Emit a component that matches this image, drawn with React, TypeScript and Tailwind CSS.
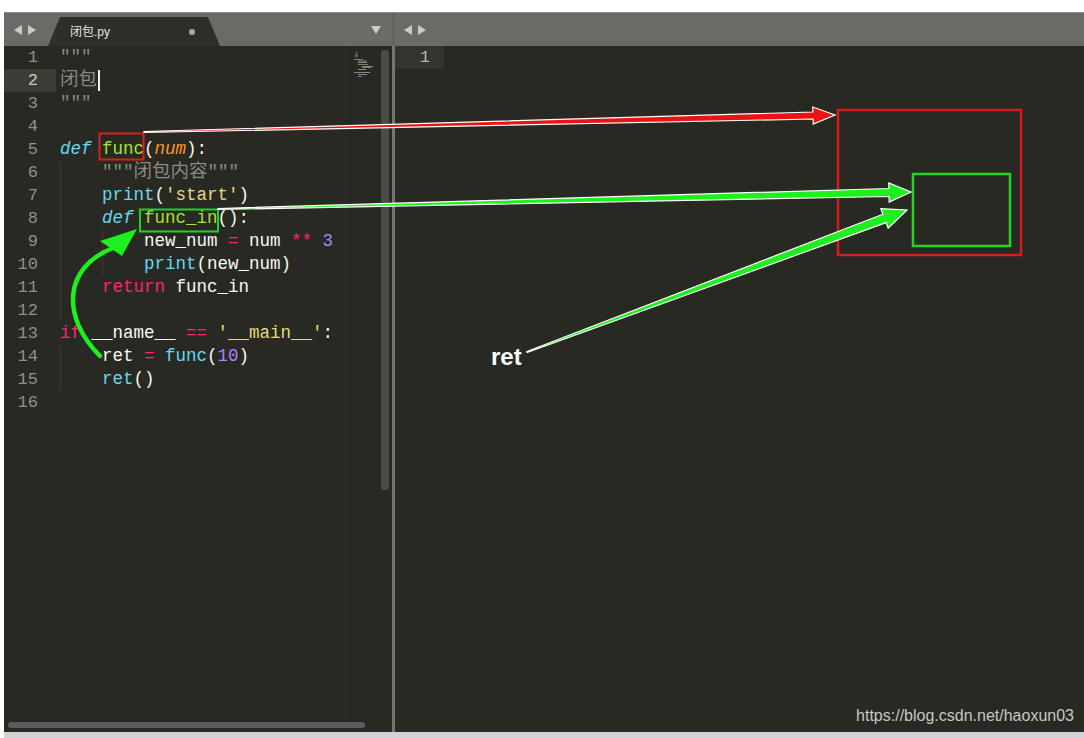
import React from 'react';

type Tok = { t: string; c?: string; it?: boolean; cjk?: boolean };
type Line = { indent: number; toks: Tok[]; cursor?: boolean };

const GREY = 'text-[#8a8a80]';
const CYAN = 'text-[#66d9ef]';
const GREEN = 'text-[#a6e22e]';
const ORANGE = 'text-[#fd971f]';
const YELLOW = 'text-[#e6db74]';
const PINK = 'text-[#f92672]';
const PURPLE = 'text-[#ae81ff]';
const WHITE = 'text-[#f8f8f2]';

const lines: Line[] = [
  { indent: 0, toks: [{ t: '"""', c: GREY }] },
  { indent: 0, toks: [{ t: '闭包', c: GREY, cjk: true }], cursor: true },
  { indent: 0, toks: [{ t: '"""', c: GREY }] },
  { indent: 0, toks: [] },
  {
    indent: 0,
    toks: [
      { t: 'def', c: CYAN, it: true },
      { t: ' ' },
      { t: 'func', c: GREEN },
      { t: '(' },
      { t: 'num', c: ORANGE, it: true },
      { t: '):' },
    ],
  },
  { indent: 1, toks: [{ t: '"""', c: GREY }, { t: '闭包内容', c: GREY, cjk: true }, { t: '"""', c: GREY }] },
  { indent: 1, toks: [{ t: 'print', c: CYAN }, { t: '(' }, { t: "'start'", c: YELLOW }, { t: ')' }] },
  { indent: 1, toks: [{ t: 'def', c: CYAN, it: true }, { t: ' ' }, { t: 'func_in', c: GREEN }, { t: '():' }] },
  {
    indent: 2,
    toks: [
      { t: 'new_num ' },
      { t: '=', c: PINK },
      { t: ' num ' },
      { t: '**', c: PINK },
      { t: ' ' },
      { t: '3', c: PURPLE },
    ],
  },
  { indent: 2, toks: [{ t: 'print', c: CYAN }, { t: '(new_num)' }] },
  { indent: 1, toks: [{ t: 'return', c: PINK }, { t: ' func_in' }] },
  { indent: 1, toks: [] },
  {
    indent: 0,
    toks: [
      { t: 'if', c: PINK },
      { t: ' __name__ ' },
      { t: '==', c: PINK },
      { t: ' ' },
      { t: "'__main__'", c: YELLOW },
      { t: ':' },
    ],
  },
  {
    indent: 1,
    toks: [
      { t: 'ret ' },
      { t: '=', c: PINK },
      { t: ' ' },
      { t: 'func', c: CYAN },
      { t: '(' },
      { t: '10', c: PURPLE },
      { t: ')' },
    ],
  },
  { indent: 1, toks: [{ t: 'ret', c: CYAN }, { t: '()' }] },
  { indent: 0, toks: [] },
];

// tapered arrow: thin at the start, full shaft width at the head
function arrowPts(x0: number, y0: number, x1: number, y1: number, w: number, hl: number, hw: number) {
  const dx = x1 - x0;
  const dy = y1 - y0;
  const len = Math.hypot(dx, dy);
  const ux = dx / len;
  const uy = dy / len;
  const nx = -uy;
  const ny = ux;
  const bx = x1 - ux * hl;
  const by = y1 - uy * hl;
  const p = (x: number, y: number) => `${x.toFixed(1)},${y.toFixed(1)}`;
  return [
    p(x0 + nx * 0.5, y0 + ny * 0.5),
    p(bx + (nx * w) / 2, by + (ny * w) / 2),
    p(bx + nx * hw, by + ny * hw),
    p(x1, y1),
    p(bx - nx * hw, by - ny * hw),
    p(bx - (nx * w) / 2, by - (ny * w) / 2),
    p(x0 - nx * 0.5, y0 - ny * 0.5),
  ].join(' ');
}

function Tri({ dir }: { dir: 'l' | 'r' | 'd' }) {
  const pts = dir === 'l' ? '8,0 8,10 0,5' : dir === 'r' ? '0,0 0,10 8,5' : '0,0 10,0 5,8';
  return (
    <svg width={dir === 'd' ? 10 : 8} height={dir === 'd' ? 8 : 10} viewBox={dir === 'd' ? '0 0 10 8' : '0 0 8 10'}>
      <polygon points={pts} fill="#c9cac6" />
    </svg>
  );
}

function TabBar() {
  return (
    <div className="h-[34px] flex bg-[#6a6b67] border-t border-[#8d8e8a]">
      <div className="w-[388px] flex items-center pl-[10px] pr-[11px]">
        <div className="flex items-center gap-[6px]">
          <Tri dir="l" />
          <Tri dir="r" />
        </div>
        <div className="self-end ml-[12px] w-[172px] h-[29px] bg-[#2e2f2a] [clip-path:polygon(12px_0,calc(100%_-_12px)_0,100%_100%,0_100%)] flex items-center justify-between pl-[22px] pr-[25px]">
          <span className="text-[12px] text-[#e6e6e2] font-['Liberation_Sans','Noto_Sans_CJK_SC',sans-serif]">闭包.py</span>
          <span className="w-[6px] h-[6px] rounded-full bg-[#a9aaa6]" />
        </div>
        <div className="flex-1" />
        <Tri dir="d" />
      </div>
      <div className="w-[3px] bg-[#62635f]" />
      <div className="flex-1 flex items-center pl-[9px]">
        <div className="flex items-center gap-[6px]">
          <Tri dir="l" />
          <Tri dir="r" />
        </div>
      </div>
    </div>
  );
}

function CodeLine({ line }: { line: Line }) {
  return (
    <div className="h-[23px] flex items-stretch whitespace-pre leading-[23px]">
      {Array.from({ length: line.indent }).map((_, i) => (
        <span key={i} className="w-[42px] shrink-0 border-l border-[#393a34]" />
      ))}
      {line.toks.map((tk, i) => (
        <span
          key={i}
          className={`${tk.c ?? WHITE} ${tk.it ? 'italic' : ''} ${tk.cjk ? 'text-[18.5px]' : ''}`}
        >
          {tk.t}
        </span>
      ))}
      {line.cursor && <span className="w-[2px] my-[1px] ml-[1px] bg-[#f0f0ea]" />}
    </div>
  );
}

function Minimap() {
  const rows = [
    [1, 3, '#8a8a80'],
    [1, 3, '#8a8a80'],
    [1, 3, '#8a8a80'],
    [0, 0, ''],
    [0, 9, '#8fc4b8'],
    [4, 9, '#7a7a70'],
    [4, 9, '#c8c8c0'],
    [4, 10, '#9fcf6a'],
    [8, 11, '#c8c8c0'],
    [8, 9, '#8fc4d8'],
    [4, 8, '#c8c8c0'],
    [0, 0, ''],
    [0, 16, '#c8c8c0'],
    [4, 9, '#c8c8c0'],
    [4, 4, '#8fc4d8'],
  ] as const;
  return (
    <div className="w-[29px] border-l border-[#1f201c] pt-[6px] pl-[3px] flex flex-col gap-[0.5px]">
      {rows.map(([ml, w, c], i) => (
        <div key={i} className="h-[1.2px] flex">
          <div style={{ width: ml }} />
          {w > 0 && <div style={{ width: w, background: c }} className="opacity-60" />}
        </div>
      ))}
    </div>
  );
}

function LeftPane() {
  return (
    <div className="w-[388px] flex flex-col">
      <div className="flex-1 flex min-h-0">
        <div className="w-[52px] flex flex-col font-['Liberation_Mono',monospace] text-[17px] text-[#8f908a]">
          {lines.map((_, i) => (
            <div
              key={i}
              className={`h-[23px] leading-[23px] text-right pr-[18px] ${i === 1 ? 'bg-[#3c3b34] text-[#c9c9c2]' : ''}`}
            >
              {i + 1}
            </div>
          ))}
        </div>
        <div className="w-[294px] pl-[4px] flex flex-col font-['Liberation_Mono','Noto_Sans_CJK_SC',monospace] text-[17.5px]">
          {lines.map((l, i) => (
            <CodeLine key={i} line={l} />
          ))}
        </div>
        <Minimap />
        <div className="w-[13px] pt-[4px] pl-[2px]">
          <div className="w-[8px] h-[440px] rounded-[3px] bg-[#4b4c47]" />
        </div>
      </div>
      <div className="h-[10px] pl-[4px]">
        <div className="w-[357px] h-[6px] rounded-[3px] bg-[#5c5d58]" />
      </div>
    </div>
  );
}

function RightPane() {
  return (
    <div className="flex-1 flex">
      <div className="w-[49px] font-['Liberation_Mono',monospace] text-[17px] text-[#b5b5ae]">
        <div className="h-[23px] leading-[23px] text-right pr-[14px] bg-[#34342e]">1</div>
      </div>
      <div className="flex-1 flex flex-col justify-end items-end pr-[10px] pb-[4px]">
        <span className="text-[16px] text-[#c6c6c4] font-['Liberation_Sans',sans-serif]">https://blog.csdn.net/haoxun03</span>
      </div>
    </div>
  );
}

function Annotations() {
  return (
    <svg className="absolute left-0 top-0 pointer-events-none" width={1084} height={738} viewBox="0 0 1084 738">
      {/* boxes */}
      <rect x={99.5} y={133.5} width={44} height={26} fill="none" stroke="#d9201f" strokeWidth={2} />
      <rect x={140} y={209.5} width={78} height={22} fill="none" stroke="#22d222" strokeWidth={2} />
      <rect x={838} y={110} width={183} height={145} fill="none" stroke="#d41c1c" strokeWidth={2.5} />
      <rect x={913} y={174} width={97} height={72} fill="none" stroke="#24d424" strokeWidth={2.5} />

      {/* straight arrows */}
      <polygon
        points={arrowPts(144, 132, 835, 115, 7, 22, 8.5)}
        fill="#ea1212"
        stroke="#ffffff"
        strokeWidth={1.2}
        strokeLinejoin="miter"
      />
      <polygon
        points={arrowPts(218, 209, 911, 192, 8, 22, 9.5)}
        fill="#1ef01e"
        stroke="#ffffff"
        strokeWidth={1.2}
        strokeLinejoin="miter"
      />
      <polygon
        points={arrowPts(527, 352, 907, 210, 9, 24, 10.5)}
        fill="#1ef01e"
        stroke="#ffffff"
        strokeWidth={1.2}
        strokeLinejoin="miter"
      />

      {/* curved arrow */}
      <path d="M100,356 C62,318 62,268 113,248" fill="none" stroke="#1ef01e" strokeWidth={4.5} strokeLinecap="round" />
      <polygon points="100,241 137,229 122,256" fill="#1ef01e" />

      <text x={491} y={365} fill="#ffffff" fontSize={24} fontWeight={700} fontFamily="'Liberation Sans', sans-serif">
        ret
      </text>
    </svg>
  );
}

export default function App() {
  return (
    <div className="relative w-[1084px] h-[738px] overflow-hidden bg-white pt-[12px] pl-[4px] flex flex-col">
      <TabBar />
      <div className="flex-1 flex min-h-0 bg-[#282923]">
        <LeftPane />
        <div className="w-[3px] bg-[#74756f]" />
        <RightPane />
      </div>
      <div className="h-[6px] bg-[#d3d3d7]" />
      <Annotations />
    </div>
  );
}
